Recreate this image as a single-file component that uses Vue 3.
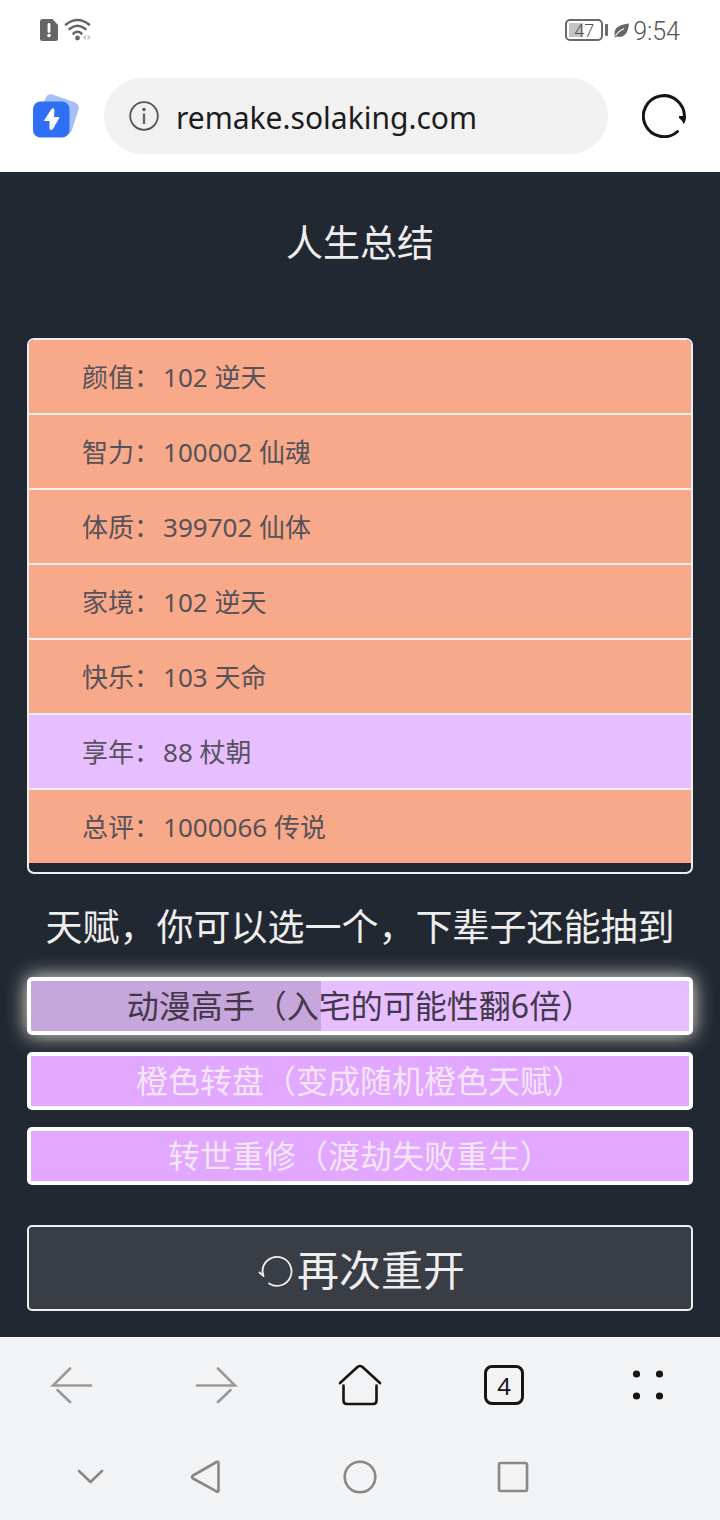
<script setup>
import { ref } from 'vue'

const url = ref('remake.solaking.com')

const summary = [
  { name: '颜值', value: '102 逆天', grade: 3 },
  { name: '智力', value: '100002 仙魂', grade: 3 },
  { name: '体质', value: '399702 仙体', grade: 3 },
  { name: '家境', value: '102 逆天', grade: 3 },
  { name: '快乐', value: '103 天命', grade: 3 },
  { name: '享年', value: '88 杖朝', grade: 2 },
  { name: '总评', value: '1000066 传说', grade: 3 }
]

const talents = [
  { id: 1, name: '动漫高手', description: '入宅的可能性翻6倍' },
  { id: 2, name: '橙色转盘', description: '变成随机橙色天赋' },
  { id: 3, name: '转世重修', description: '渡劫失败重生' }
]

const selected = ref(1)
const tabCount = ref(4)

const toggleTalent = (id) => {
  selected.value = selected.value === id ? null : id
}
</script>

<template>
  <div class="page">
    <header class="top">
      <div class="status-bar">
        <div class="status-group">
          <svg class="sim" width="18" height="22" viewBox="0 0 18 22">
            <path d="M3 0H12.500L18 6V19.500Q18 22 15.500 22H2.500Q0 22 0 19.500V2.500Q0 0 3 0Z" fill="#666" />
            <path d="M9 5.500V12.500" stroke="#fff" stroke-width="2.800" stroke-linecap="round" />
            <circle cx="9" cy="16.500" r="1.800" fill="#fff" />
          </svg>
          <svg width="28" height="24" viewBox="0 0 28 24" fill="none">
            <g stroke="#666" stroke-width="2.600" stroke-linecap="round">
              <path d="M2 6.500Q13.500 -2.500 25 6.500" />
              <path d="M5.500 11Q13.500 4.500 21.500 11" />
              <path d="M9.500 15.500Q13.500 12 17.500 15.500" />
            </g>
            <circle cx="13.500" cy="20" r="2.400" fill="#666" />
            <path d="M22 16.500V22.500L18.500 19.500ZM23.500 16.500V22.500L27 19.500Z" fill="#ccc" />
          </svg>
        </div>
        <div class="status-group">
          <span class="battery">47</span>
          <span class="battery-cap"></span>
          <svg class="leaf" width="15" height="15" viewBox="0 0 15 15">
            <path d="M15 0.500Q14.500 7 12 10.500Q8.500 15 3 13.500L1 14.500Q-0.500 9 2 5.500Q5.500 1.500 15 0.500Z" fill="#666" />
            <path d="M1.500 12.500Q4.500 8 10 5.500" fill="none" stroke="#fff" stroke-width="1.200" />
          </svg>
          <span class="clock">9:54</span>
        </div>
      </div>

      <div class="address-row">
        <button class="icon-btn" aria-label="快捷">
          <svg width="46" height="46" viewBox="0 0 46 46">
            <path d="M11 9L13 4.500Q15 0.200 19.500 1.500L41 9Q47 11.500 45.500 16.500L39.500 35.500Q38 40.500 34 42Z" fill="#a3c0f7" />
            <rect x="0" y="8.500" width="36.500" height="36" rx="7.500" fill="#2f6ff5" />
            <path d="M19 16L11.500 27.500H17V36Q18 37.500 19.500 36L26 24.500H20.500L21 16.500Q20 15 19 16Z" fill="#fff" stroke="#fff" stroke-linejoin="round" />
          </svg>
        </button>
        <label class="address">
          <svg width="30" height="30" viewBox="0 0 30 30" fill="none">
            <circle cx="15" cy="15" r="13.800" stroke="#555" stroke-width="1.800" />
            <path d="M15 12.500V23" stroke="#666" stroke-width="2.400" />
            <circle cx="15" cy="8.500" r="1.700" fill="#555" />
          </svg>
          <input v-model="url" type="text" aria-label="网址" />
        </label>
        <button class="icon-btn" aria-label="刷新">
          <svg width="44" height="44" viewBox="0 0 44 44" fill="none">
            <path d="M35.500 37.500A20.500 20.500 0 1 1 42.300 24" stroke="#151515" stroke-width="3" stroke-linecap="round" />
            <path d="M37 22H44V24Q43.500 28 41.500 30Q40 26 37 24Z" fill="#151515" />
          </svg>
        </button>
      </div>
    </header>

    <main class="game">
      <h1 class="heading summary-title">人生总结</h1>

      <ul class="summary">
        <li v-for="item in summary" :key="item.name" :class="'grade' + item.grade">
          <span>{{ item.name }}：</span><span>{{ item.value }}</span>
        </li>
      </ul>

      <h2 class="heading talent-title">天赋，你可以选一个，下辈子还能抽到</h2>

      <div class="talents">
        <button
          v-for="t in talents"
          :key="t.id"
          :class="['talent', { selected: selected === t.id }]"
          :aria-pressed="selected === t.id"
          @click="toggleTalent(t.id)"
        >{{ t.name }}（{{ t.description }}）</button>
      </div>

      <button class="again">
        <svg width="42" height="42" viewBox="0 0 42 42" fill="none" stroke="#eee" stroke-width="1.800" stroke-linecap="round" stroke-linejoin="round">
          <path d="M14 34.500A14.500 14.500 0 1 0 7.500 22.500L8.500 27L4.500 23.500" />
        </svg>
        <span>再次重开</span>
      </button>
    </main>

    <footer class="bottom">
      <nav class="toolbar">
        <button class="icon-btn" aria-label="后退">
          <svg width="44" height="44" viewBox="0 0 44 44" fill="none" stroke="#999" stroke-width="2.600" stroke-linecap="round">
            <path d="M41 22.500H3L20 5.500M7.500 27L20 39" />
          </svg>
        </button>
        <button class="icon-btn" aria-label="前进">
          <svg width="44" height="44" viewBox="0 0 44 44" fill="none" stroke="#999" stroke-width="2.600" stroke-linecap="round">
            <path d="M3 22.500H41L24 5.500M36.500 27L24 39" />
          </svg>
        </button>
        <button class="icon-btn" aria-label="主页">
          <svg width="44" height="44" viewBox="0 0 44 44" fill="none" stroke="#151515" stroke-width="2.600" stroke-linecap="round" stroke-linejoin="round">
            <path d="M2 20L19.500 4Q22 2 24.500 4L42 20" />
            <path d="M5.500 22.500V37.500Q5.500 41 9 41H35Q38.500 41 38.500 37.500V22.500" />
          </svg>
        </button>
        <button class="icon-btn" aria-label="标签页">
          <span class="tab-count">{{ tabCount }}</span>
        </button>
        <button class="icon-btn" aria-label="菜单">
          <svg width="44" height="44" viewBox="0 0 44 44" fill="#151515">
            <circle cx="10.500" cy="11" r="3.600" />
            <circle cx="33.500" cy="11" r="3.600" />
            <circle cx="10.500" cy="33" r="3.600" />
            <circle cx="33.500" cy="33" r="3.600" />
          </svg>
        </button>
      </nav>
      <nav class="system-nav">
        <button class="icon-btn" aria-label="收起">
          <svg width="36" height="36" viewBox="0 0 36 36">
            <path d="M6 12L17.500 23L29 12" />
          </svg>
        </button>
        <button class="icon-btn" aria-label="返回">
          <svg width="36" height="36" viewBox="0 0 36 36">
            <path d="M30.500 4.500V31Q30.500 33.500 28.500 32.300L5 19.500Q3 18 5 16.500L28.500 3Q30.500 2 30.500 4.500Z" />
          </svg>
        </button>
        <button class="icon-btn" aria-label="桌面">
          <svg width="36" height="36" viewBox="0 0 36 36">
            <circle cx="18" cy="18" r="15.300" />
          </svg>
        </button>
        <button class="icon-btn" aria-label="最近任务">
          <svg width="36" height="36" viewBox="0 0 36 36">
            <rect x="3" y="4" width="28" height="28" rx="1.500" />
          </svg>
        </button>
      </nav>
    </footer>
  </div>
</template>

<style>
body {
  margin: 0;
}
</style>

<style scoped>
.page {
  min-height: 100vh;
  display: flex;
  flex-direction: column;
  background: #222831;
  font-family: "Noto Sans", "Noto Sans CJK SC", sans-serif;
}
button {
  margin: 0;
  padding: 0;
  font-family: inherit;
  cursor: pointer;
}
svg {
  display: block;
  flex: none;
}
.icon-btn {
  display: flex;
  align-items: center;
  justify-content: center;
  border: 0;
  background: none;
}

.top {
  background: #fff;
}
.status-bar {
  height: 60px;
  padding: 0 40px;
  display: flex;
  align-items: center;
  justify-content: space-between;
}
.status-group {
  display: flex;
  align-items: center;
}
.sim {
  margin-right: 6px;
}
.battery {
  box-sizing: border-box;
  width: 38px;
  height: 22px;
  border: 2px solid #6a6a6a;
  border-radius: 5px;
  background: linear-gradient(90deg, #c4c4c4 46%, transparent 46%) 2px 2px / 30px 14px no-repeat;
  color: #555;
  font-family: Roboto, sans-serif;
  font-size: 18px;
  font-weight: 300;
  line-height: 19px;
  text-align: center;
}
.battery-cap {
  width: 3px;
  height: 12px;
  margin: 0 6px 0 2px;
  border-radius: 1px;
  background: #6a6a6a;
}
.leaf {
  margin-right: 4px;
}
.clock {
  padding-top: 4px;
  color: #555;
  font-family: Roboto, sans-serif;
  font-size: 25px;
  font-weight: 300;
  line-height: 30px;
}

.address-row {
  display: flex;
  align-items: center;
  padding: 18px 34px 18px 33px;
}
.address {
  flex: 1;
  min-width: 0;
  height: 76px;
  margin: 0 34px 0 25px;
  padding: 0 25px;
  box-sizing: border-box;
  display: flex;
  align-items: center;
  gap: 17px;
  border-radius: 38px;
  background: #f1f1f1;
}
.address input {
  flex: 1;
  min-width: 0;
  padding: 4px 0 0;
  border: 0;
  outline: 0;
  background: none;
  color: #1c1c1c;
  font-family: inherit;
  font-size: 30px;
  line-height: 40px;
}

.game {
  flex: 1;
  display: flex;
  flex-direction: column;
  padding: 46px 27px 26px;
}
.heading {
  margin: 0;
  color: #eee;
  font-size: 37px;
  font-weight: 400;
  line-height: 50px;
  text-align: center;
}
.summary-title {
  margin-bottom: 70px;
}
.summary {
  margin: 0;
  padding: 0 0 9px;
  list-style: none;
  border: 2px solid #eee;
  border-radius: 7px;
}
.summary li {
  display: flex;
  gap: 3px;
  padding: 2px 53px 0;
  border-bottom: 2px solid #eee;
  color: #555259;
  font-size: 26px;
  line-height: 71px;
}
.summary li:first-child {
  border-radius: 5px 5px 0 0;
}
.summary li:last-child {
  border-bottom: 0;
}
.grade2 {
  background: #e7beff;
}
.grade3 {
  background: #f7a98a;
}
.talent-title {
  margin: 28px 0 25px;
}
.talents {
  display: flex;
  flex-direction: column;
  gap: 17px;
  margin-bottom: 40px;
}
.talent {
  border: 4px solid #fff;
  border-radius: 5px;
  background: #e2a7ff;
  color: #f3e6f8;
  font-size: 32px;
  line-height: 50px;
}
.talent.selected {
  background: linear-gradient(90deg, #c7a6dc 44%, #e7beff 44%);
  color: #42384a;
  box-shadow: 0 0 20px #eeeee0;
}
.again {
  display: flex;
  align-items: center;
  justify-content: center;
  padding-top: 4px;
  border: 2px solid #eee;
  border-radius: 5px;
  background: #393e46;
  color: #eee;
  font-size: 42px;
  line-height: 78px;
}

.bottom {
  background: #f1f3f5;
}
.toolbar {
  height: 96px;
  display: grid;
  grid-template-columns: repeat(5, 1fr);
}
.tab-count {
  box-sizing: border-box;
  width: 40px;
  height: 40px;
  border: 3px solid #151515;
  border-radius: 8px;
  color: #151515;
  font-size: 24px;
  line-height: 35px;
}
.system-nav {
  height: 87px;
  padding: 0 129px 0 52px;
  display: grid;
  grid-template-columns: 1fr 2fr 2fr 2fr;
}
.system-nav svg {
  fill: none;
  stroke: #888;
  stroke-width: 2.6;
  stroke-linecap: round;
  stroke-linejoin: round;
}
</style>
